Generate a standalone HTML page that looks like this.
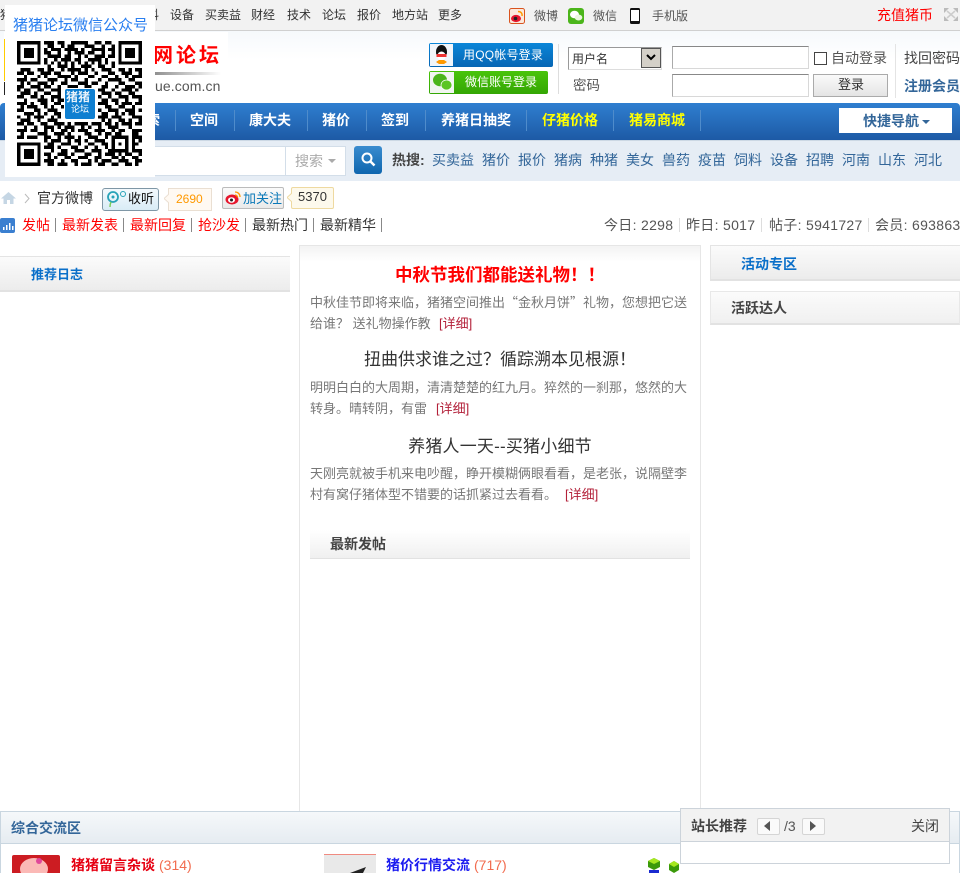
<!DOCTYPE html>
<html lang="zh"><head><meta charset="utf-8"><title>猪猪网论坛</title>
<style>
html,body{margin:0;padding:0;background:#fff}
#p{position:relative;width:960px;height:873px;overflow:hidden;font-family:"Liberation Sans","WenQuanYi Zen Hei","Noto Sans CJK SC",sans-serif;font-size:14px;color:#444;background:#fff}
#p div,#p span.a,#p svg{position:absolute}
.t{position:absolute;white-space:nowrap;line-height:20px;height:20px}
.s12{font-size:12px}.s13{font-size:13px}.b{font-weight:bold}
.n{color:#fff;font-weight:bold;font-size:14px;top:110px}
.y{color:#ff0}
.d{width:1px;top:110px;height:21px;background:#4f8ccb}
.h{color:#369;top:150px}
.bd{font-size:13px;color:#777;line-height:21px;left:310px;width:382px;white-space:nowrap}
.bd i{font-style:normal;color:#b3213a;position:absolute;top:21px}
.c{left:300px;width:400px;text-align:center;white-space:nowrap;line-height:24px}
.f{font-family:"Noto Sans CJK SC",sans-serif;line-height:1}
.st{color:#555;letter-spacing:.3px;top:215px}
</style></head><body><div id="p">

<div style="left:0;top:0;width:960px;height:30px;background:#f2f2f2;border-bottom:1px solid #d0d0d0"></div>
<span class="t s12" style="left:0;top:5px;color:#333">猪</span>
<span class="t s12" style="left:147px;top:5px;color:#333">料</span>
<span class="t s12" style="left:170px;top:5px;color:#333">设备</span>
<span class="t s12" style="left:205px;top:5px;color:#333">买卖益</span>
<span class="t s12" style="left:251px;top:5px;color:#333">财经</span>
<span class="t s12" style="left:287px;top:5px;color:#333">技术</span>
<span class="t s12" style="left:322px;top:5px;color:#333">论坛</span>
<span class="t s12" style="left:357px;top:5px;color:#333">报价</span>
<span class="t s12" style="left:392px;top:5px;color:#333">地方站</span>
<span class="t s12" style="left:438px;top:5px;color:#333">更多</span>

<svg style="left:509px;top:8px" width="16" height="16" viewBox="0 0 16 16"><rect x=".5" y=".5" width="15" height="15" rx="2" fill="#fbe9dc" stroke="#d9531e"/><ellipse cx="7" cy="10.500" rx="5" ry="3.600" fill="#e6162d"/><circle cx="6.500" cy="10.500" r="1.800" fill="#222"/><path d="M9 3.500c3 0 4.500 2 4 4.500" fill="none" stroke="#f90" stroke-width="1.500"/></svg>
<span class="t s12" style="left:534px;top:6px;color:#555">微博</span>
<svg style="left:568px;top:8px" width="16" height="16" viewBox="0 0 16 16"><rect width="16" height="16" rx="3" fill="#4bb51a"/><ellipse cx="6.500" cy="6.500" rx="4.500" ry="3.700" fill="#fff"/><ellipse cx="10.500" cy="9.500" rx="3.800" ry="3" fill="#eaf7df"/></svg>
<span class="t s12" style="left:593px;top:6px;color:#555">微信</span>
<svg style="left:630px;top:8px" width="10" height="16" viewBox="0 0 10 16"><rect width="10" height="16" rx="1.500" fill="#111"/><rect x="1" y="2" width="8" height="11" fill="#fff"/></svg>
<span class="t s12" style="left:652px;top:6px;color:#555">手机版</span>
<span class="t" style="left:877px;top:5px;color:#f00;font-size:14px">充值猪币</span>
<svg style="left:943px;top:7px" width="16" height="15" viewBox="0 0 16 15"><path d="M1 1h5L1 6zM15 1h-5l5 5zM1 14h5L1 9zM15 14h-5l5-5z" fill="#bbb"/><path d="M4 4l8 7M12 4l-8 7" stroke="#ccc" stroke-width="1.500"/></svg>

<!-- header -->
<div style="left:0;top:31px;width:960px;height:72px;background:linear-gradient(#f6f9fc,#fff 40%)"></div>
<div style="left:4px;top:32px;width:224px;height:70px;background:#fff"></div>
<div style="left:4px;top:39px;width:2px;height:42px;background:#fc0"></div>
<div style="left:4px;top:82px;width:1px;height:13px;background:#222"></div>
<span class="t b" style="left:153px;top:45px;color:#f00;font-size:20px;line-height:22px;height:22px;letter-spacing:3px">网论坛</span>
<div style="left:150px;top:72px;width:71px;height:3px;background:linear-gradient(90deg,#888,#fff)"></div>
<span class="t" style="left:155px;top:76px;color:#555;font-size:14px;letter-spacing:.1px">ue.com.cn</span>

<!-- login buttons -->
<div style="left:429px;top:43px;width:124px;height:24px;background:linear-gradient(#0a86d8,#0766b4);border-radius:2px"></div>
<div style="left:430px;top:44px;width:23px;height:22px;background:#f1f5fa"></div>
<svg style="left:433px;top:44px" width="17" height="21" viewBox="0 0 17 21"><ellipse cx="8.500" cy="8" rx="5.500" ry="7" fill="#111"/><ellipse cx="8.500" cy="12" rx="4.200" ry="4.500" fill="#fff"/><rect x="3.500" y="10" width="10" height="3" fill="#e33"/><path d="M3 18l3-2h5l3 2-3 2H6z" fill="#f90"/></svg>
<span class="t s12" style="left:463px;top:45px;color:#fff;letter-spacing:.2px">用QQ帐号登录</span>
<div style="left:429px;top:71px;width:119px;height:23px;background:linear-gradient(#49c40a,#34a604);border-radius:2px"></div>
<div style="left:430px;top:72px;width:24px;height:21px;background:#f1f5f0"></div>
<svg style="left:432px;top:72px" width="21" height="20" viewBox="0 0 21 20"><ellipse cx="8" cy="8" rx="7" ry="6.200" fill="#4bb51a"/><ellipse cx="14.500" cy="13" rx="5.500" ry="5" fill="#5cc523" stroke="#fff" stroke-width=".7"/></svg>
<span class="t s12" style="left:465px;top:72px;color:#fff">微信账号登录</span>
<div style="left:558px;top:44px;width:1px;height:50px;background:#ddd"></div>

<!-- form -->
<div style="left:568px;top:47px;width:92px;height:21px;border:1px solid #ddd;border-top-color:#999;border-left-color:#999;background:#fff"></div>
<span class="t s12" style="left:572px;top:49px;color:#333">用户名</span>
<div style="left:641px;top:48px;width:18px;height:18px;background:#d4d0c8;border:1px solid #555"></div>
<svg style="left:645px;top:53px" width="12" height="9" viewBox="0 0 12 9"><path d="M2 2l4 4 4-4" fill="none" stroke="#000" stroke-width="2"/></svg>
<span class="t" style="left:573px;top:76px;color:#555;font-size:13.500px">密码</span>
<div style="left:672px;top:46px;width:135px;height:21px;border:1px solid #d8d8d8;border-top-color:#888;border-left-color:#aaa;background:#fff"></div>
<div style="left:672px;top:74px;width:135px;height:21px;border:1px solid #d8d8d8;border-top-color:#888;border-left-color:#aaa;background:#fff"></div>
<div style="left:814px;top:52px;width:11px;height:11px;border:1px solid #444;background:#fff"></div>
<span class="t" style="left:831px;top:48px;color:#555">自动登录</span>
<div style="left:813px;top:74px;width:73px;height:21px;border:1px solid #aaa;background:linear-gradient(#fafafa,#e4e4e4)"></div>
<span class="t s13" style="left:838px;top:75px;color:#333">登录</span>
<div style="left:895px;top:44px;width:1px;height:54px;background:#e4e4e4"></div>
<span class="t" style="left:904px;top:48px;color:#444">找回密码</span>
<span class="t b" style="left:904px;top:76px;color:#369">注册会员</span>

<!-- nav -->
<div style="left:0;top:103px;width:960px;height:37px;border-radius:4px 4px 0 0;background:linear-gradient(#2f7fd0,#1d5aa5)"></div>
<div style="left:0;top:140px;width:960px;height:1px;background:#ccd8e4"></div>
<span class="t n" style="left:146px">索</span>
<div class="d" style="left:175px"></div><span class="t n" style="left:190px">空间</span>
<div class="d" style="left:234px"></div><span class="t n" style="left:249px">康大夫</span>
<div class="d" style="left:307px"></div><span class="t n" style="left:322px">猪价</span>
<div class="d" style="left:366px"></div><span class="t n" style="left:381px">签到</span>
<div class="d" style="left:425px"></div><span class="t n" style="left:441px">养猪日抽奖</span>
<div class="d" style="left:526px"></div><span class="t n y" style="left:542px">仔猪价格</span>
<div class="d" style="left:613px"></div><span class="t n y" style="left:629px">猪易商城</span>
<div class="d" style="left:700px"></div>
<div style="left:839px;top:108px;width:113px;height:25px;background:#fff"></div>
<span class="t b" style="left:863px;top:111px;color:#369;font-size:14px">快捷导航</span>
<div style="left:922px;top:120px;width:0;height:0;border:4px solid transparent;border-top:4px solid #369;border-bottom:0"></div>

<!-- search band -->
<div style="left:0;top:141px;width:960px;height:40px;background:#e6edf5"></div>
<div style="left:100px;top:146px;width:244px;height:28px;background:#fff;border:1px solid #d3dee9"></div>
<div style="left:285px;top:146px;width:1px;height:29px;background:#d3dee9"></div>
<span class="t" style="left:295px;top:151px;color:#aaa">搜索</span>
<div style="left:328px;top:159px;width:0;height:0;border:4px solid transparent;border-top:4px solid #aaa;border-bottom:0"></div>
<div style="left:354px;top:146px;width:28px;height:28px;border-radius:3px;background:linear-gradient(#3a8ccf,#0f66ae)"></div>
<svg style="left:360px;top:151px" width="17" height="17" viewBox="0 0 17 17"><circle cx="7" cy="7" r="4.500" fill="none" stroke="#fff" stroke-width="2"/><path d="M10.500 10.500l4 4" stroke="#fff" stroke-width="2.500"/></svg>
<span class="t b" style="left:392px;top:150px;color:#444;font-size:14px">热搜:</span>
<span class="t h" style="left:432px">买卖益</span><span class="t h" style="left:482px">猪价</span><span class="t h" style="left:518px">报价</span><span class="t h" style="left:554px">猪病</span><span class="t h" style="left:590px">种猪</span><span class="t h" style="left:626px">美女</span><span class="t h" style="left:662px">兽药</span><span class="t h" style="left:698px">疫苗</span><span class="t h" style="left:734px">饲料</span><span class="t h" style="left:770px">设备</span><span class="t h" style="left:806px">招聘</span><span class="t h" style="left:842px">河南</span><span class="t h" style="left:878px">山东</span><span class="t h" style="left:914px">河北</span>

<!-- weibo row -->
<svg style="left:1px;top:191px" width="15" height="14" viewBox="0 0 15 14"><path d="M7.500 1L0 7.500h2.500V13h3.500V9h3v4h3.500V7.500H15z" fill="#c5d6e4"/></svg>
<svg style="left:24px;top:193px" width="6" height="11" viewBox="0 0 6 11"><path d="M1 1l4 4.500-4 4.500" fill="none" stroke="#bbb"/></svg>
<span class="t" style="left:37px;top:188px;color:#333">官方微博</span>
<div style="left:102px;top:188px;width:55px;height:21px;border:1px solid #7f97a6;border-radius:3px;background:linear-gradient(#f3f9fd,#d9ecf6)"></div>
<svg style="left:106px;top:190px" width="22" height="18" viewBox="0 0 22 18"><circle cx="7" cy="7" r="5" fill="none" stroke="#28a3b8" stroke-width="1.800"/><circle cx="7" cy="7" r="1.500" fill="#28a3b8"/><path d="M5 12c-1 2-1 3-1 5" stroke="#7c5" stroke-width="1.400" fill="none"/><circle cx="17" cy="4" r="2.500" fill="none" stroke="#28a3b8"/></svg>
<span class="t s13" style="left:128px;top:189px;color:#111">收听</span>
<div style="left:168px;top:188px;width:42px;height:21px;border:1px solid #eadfd2;background:#fff9f2"></div>
<svg style="left:164px;top:194px" width="5" height="9" viewBox="0 0 5 9"><path d="M5 0L0 4.500 5 9z" fill="#fff9f2"/><path d="M5 0L0 4.500 5 9" fill="none" stroke="#eadfd2"/></svg>
<span class="t s12" style="left:176px;top:189px;color:#f90">2690</span>
<div style="left:222px;top:187px;width:60px;height:20px;border:1px solid #bbb;border-radius:2px;background:linear-gradient(#fafafa,#eaeaea)"></div>
<svg style="left:225px;top:190px" width="17" height="15" viewBox="0 0 17 15"><ellipse cx="7" cy="9.500" rx="6.500" ry="5" fill="#e6162d"/><ellipse cx="6.500" cy="10" rx="3.500" ry="2.800" fill="#fff"/><circle cx="6.500" cy="10" r="1.500" fill="#222"/><path d="M10 2c3 0 5 2 5 5M10 5c1.500 0 2.500 1 2.500 2.500" fill="none" stroke="#f90" stroke-width="1.300"/></svg>
<span class="t s13" style="left:243px;top:189px;color:#0a78b8">加关注</span>
<div style="left:291px;top:187px;width:41px;height:20px;border:1px solid #eed9a0;background:#fdf9ec;border-radius:2px"></div>
<svg style="left:287px;top:193px" width="5" height="9" viewBox="0 0 5 9"><path d="M5 0L0 4.500 5 9z" fill="#fdf9ec"/><path d="M5 0L0 4.500 5 9" fill="none" stroke="#eed9a0"/></svg>
<span class="t s13" style="left:298px;top:187px;color:#333">5370</span>

<!-- stats row -->
<svg style="left:0;top:218px" width="15" height="15" viewBox="0 0 15 15"><rect width="15" height="15" rx="2" fill="#3a7fd0"/><path d="M3 9h1.500v3H3zM6 7h1.500v5H6zM9 5h1.500v7H9zM12 8h1.500v4H12z" fill="#fff"/></svg>
<span class="t" style="left:22px;top:215px;color:#f00">发帖</span>
<span class="t" style="left:62px;top:215px;color:#f00">最新发表</span>
<span class="t" style="left:130px;top:215px;color:#f00">最新回复</span>
<span class="t" style="left:198px;top:215px;color:#f00">抢沙发</span>
<span class="t" style="left:252px;top:215px;color:#333">最新热门</span>
<span class="t" style="left:320px;top:215px;color:#333">最新精华</span>
<div style="left:55px;top:218px;width:1px;height:14px;background:#888"></div>
<div style="left:123px;top:218px;width:1px;height:14px;background:#888"></div>
<div style="left:191px;top:218px;width:1px;height:14px;background:#888"></div>
<div style="left:245px;top:218px;width:1px;height:14px;background:#888"></div>
<div style="left:313px;top:218px;width:1px;height:14px;background:#888"></div>
<div style="left:381px;top:218px;width:1px;height:14px;background:#888"></div>
<span class="t st" style="left:604px">今日: 2298</span>
<span class="t st" style="left:686px">昨日: 5017</span>
<span class="t st" style="left:769px">帖子: 5941727</span>
<span class="t st" style="left:875px">会员: 693863</span>
<div style="left:679px;top:218px;width:1px;height:14px;background:#ddd"></div>
<div style="left:761px;top:218px;width:1px;height:14px;background:#ddd"></div>
<div style="left:868px;top:218px;width:1px;height:14px;background:#ddd"></div>

<!-- left col -->
<div style="left:0;top:256px;width:290px;height:33px;border-top:1px solid #e4e4e4;border-bottom:2px solid #e2e2e2;background:linear-gradient(#fbfbfb,#ececec)"></div>
<span class="t s13 b" style="left:31px;top:265px;color:#0a6fc9">推荐日志</span>

<!-- centre col -->
<div style="left:299px;top:245px;width:400px;height:565px;border:1px solid #e6e6e6;background:#fff"></div>
<div style="left:300px;top:246px;width:400px;height:16px;background:linear-gradient(#f3f3f3,#fff)"></div>
<span class="a c b" style="top:263px;color:#f00;font-size:17.500px">中秋节我们都能送礼物！！</span>
<div class="bd" style="top:292px">中秋佳节即将来临，猪猪空间推出<span class="f">“金秋月饼”</span>礼物，您想把它送<br>给谁？ 送礼物操作教<i style="left:129px">[详细]</i></div>
<span class="a c" style="top:348px;color:#333;font-size:17px">扭曲供求谁之过<span class="f">？</span>循踪溯本见根源<span class="f">！</span></span>
<div class="bd" style="top:377px">明明白白的大周期，清清楚楚的红九月。猝然的一刹那，悠然的大<br>转身。晴转阴，有雷<i style="left:126px">[详细]</i></div>
<span class="a c" style="top:435px;color:#333;font-size:17px;letter-spacing:.2px">养猪人一天--买猪小细节</span>
<div class="bd" style="top:463px">天刚亮就被手机来电吵醒，睁开模糊俩眼看看，是老张，说隔壁李<br>村有窝仔猪体型不错要的话抓紧过去看看。<i style="left:255px">[详细]</i></div>
<div style="left:310px;top:530px;width:380px;height:28px;border-bottom:1px solid #e2e2e2;background:linear-gradient(#fff,#f0f0f0)"></div>
<span class="t b" style="left:330px;top:534px;color:#444">最新发帖</span>

<!-- right col -->
<div style="left:710px;top:245px;width:250px;height:33px;border-top:1px solid #e4e4e4;border-left:1px solid #e4e4e4;border-bottom:2px solid #e2e2e2;background:linear-gradient(#fbfbfb,#ececec)"></div>
<span class="t b" style="left:741px;top:254px;color:#0a6fc9">活动专区</span>
<div style="left:710px;top:291px;width:248px;height:31px;border:1px solid #e8e8e8;border-bottom:2px solid #e2e2e2;background:linear-gradient(#fbfbfb,#f0f0f0)"></div>
<span class="t b" style="left:731px;top:298px;color:#444">活跃达人</span>

<!-- bottom -->
<div style="left:0;top:811px;width:958px;height:62px;border:1px solid #c9d6e0"></div>
<div style="left:1px;top:812px;width:958px;height:31px;border-bottom:1px solid #c9d6e0;background:linear-gradient(#f5f8fa,#e6ecf1)"></div>
<span class="t b" style="left:11px;top:818px;color:#369">综合交流区</span>
<div style="left:12px;top:855px;width:48px;height:18px;background:#cc1c22;border-radius:2px 2px 0 0"></div>
<svg style="left:16px;top:855px" width="36" height="18" viewBox="0 0 36 18"><ellipse cx="18" cy="14" rx="14" ry="11" fill="#fbb9b6"/><circle cx="23" cy="6" r="3" fill="#e0489a"/></svg>
<span class="t b" style="left:71px;top:855px;color:#e60012">猪猪留言杂谈</span>
<span class="t" style="left:159px;top:855px;color:#f26c4f">(314)</span>
<div style="left:324px;top:854px;width:52px;height:19px;border-top:1px solid #f08a80;background:#e9e9e9"></div>
<svg style="left:350px;top:866px" width="26" height="7" viewBox="0 0 26 7"><path d="M0 7L16 1l-3 6z" fill="#222"/></svg>
<span class="t b" style="left:386px;top:855px;color:#1c1cf0">猪价行情交流</span>
<span class="t" style="left:474px;top:855px;color:#f26c4f">(717)</span>
<svg style="left:646px;top:857px" width="34" height="16" viewBox="0 0 34 16"><path d="M2 4l6-3 6 3v6l-6 3-6-3z" fill="#3b9a0a"/><path d="M2 4l6-3 6 3-6 3z" fill="#a5e81f"/><rect x="3" y="13" width="10" height="3" fill="#1a2ad0"/><path d="M23 7l5-3 5 3v6l-5 3-5-3z" fill="#3b9a0a"/><path d="M23 7l5-3 5 3-5 3z" fill="#a5e81f"/></svg>

<!-- popup -->
<div style="left:680px;top:808px;width:268px;height:54px;border:1px solid #ccd3da;background:#fff"></div>
<div style="left:681px;top:809px;width:268px;height:32px;background:#f2f2f2;border-bottom:1px solid #ccd3da"></div>
<span class="t b" style="left:691px;top:816px;color:#444">站长推荐</span>
<div style="left:757px;top:818px;width:21px;height:15px;border:1px solid #d5d5d5;border-radius:2px;background:#fafafa"></div>
<svg style="left:764px;top:821px" width="7" height="11" viewBox="0 0 7 11"><path d="M6 0v10L0 5z" fill="#555"/></svg>
<span class="t" style="left:784px;top:816px;color:#555">/3</span>
<div style="left:802px;top:818px;width:21px;height:15px;border:1px solid #d5d5d5;border-radius:2px;background:#fafafa"></div>
<svg style="left:810px;top:821px" width="7" height="11" viewBox="0 0 7 11"><path d="M0 0v10l6-5z" fill="#555"/></svg>
<span class="t" style="left:911px;top:816px;color:#444">关闭</span>

<!-- QR panel -->
<div style="left:5px;top:5px;width:150px;height:172px;background:#fff"></div>
<span class="t" style="left:13px;top:16px;color:#2a7ff0;font-size:15px">猪猪论坛微信公众号</span>
<svg style="left:17px;top:41px" width="125" height="125" viewBox="0 0 37 37" shape-rendering="crispEdges">
<path fill-rule="evenodd" d="M0 0h7v7H0zM1 1v5h5V1zM2 2h3v3H2zM30 0h7v7h-7zM31 1v5h5V1zM32 2h3v3h-3zM0 30h7v7H0zM1 31v5h5v-5zM2 32h3v3H2zM28 28h5v5h-5zM29 29v3h3v-3zM30 30h1v1h-1z" fill="#000"/>
<path transform="translate(0 .5)" stroke="#000" stroke-width="1" fill="none" d="M8 0h3M12 0h2M16 0h5M23 0h2M26 0h2
M9 1h2M13 1h1M15 1h2M20 1h3M25 1h1M28 1h1
M8 2h1M10 2h3M14 2h4M19 2h1M22 2h4M27 2h2
M8 3h2M12 3h1M15 3h1M17 3h3M21 3h2M25 3h1M28 3h1
M9 4h4M14 4h2M18 4h1M20 4h1M23 4h3M27 4h2
M8 5h1M11 5h1M13 5h3M17 5h2M21 5h4M26 5h1
M8 6h1M10 6h1M12 6h1M14 6h1M16 6h1M18 6h1M20 6h1M22 6h1M24 6h1M26 6h1M28 6h1
M9 7h1M12 7h3M16 7h1M19 7h3M24 7h2M28 7h1
M1 8h3M6 8h2M9 8h2M13 8h1M15 8h4M20 8h1M22 8h1M25 8h3M30 8h2M33 8h1M35 8h2
M0 9h2M3 9h2M7 9h3M11 9h2M16 9h1M18 9h3M23 9h1M27 9h2M31 9h3M36 9h1
M2 10h1M6 10h1M8 10h1M12 10h4M17 10h1M21 10h2M25 10h2M29 10h1M32 10h1M34 10h3
M0 11h3M4 11h2M9 11h3M14 11h1M16 11h2M20 11h1M24 11h1M27 11h4M33 11h2
M1 12h1M3 12h1M6 12h3M10 12h1M13 12h2M18 12h3M22 12h2M26 12h1M30 12h2M35 12h2
M0 13h2M4 13h3M8 13h2M12 13h1M15 13h3M20 13h2M25 13h2M29 13h1M32 13h3M36 13h1
M0 14h1M2 14h2M6 14h2M10 14h3M24 14h2M28 14h1M31 14h3M35 14h1
M1 15h3M5 15h1M8 15h2M12 15h1M25 15h3M29 15h2M33 15h2
M0 16h2M4 16h2M7 16h1M10 16h3M24 16h1M27 16h1M30 16h3M34 16h3
M2 17h1M6 17h3M10 17h1M12 17h2M25 17h2M28 17h2M32 17h1M36 17h1
M0 18h3M4 18h1M7 18h2M11 18h2M24 18h3M29 18h1M31 18h3M35 18h2
M1 19h1M3 19h3M8 19h1M10 19h1M13 19h1M26 19h2M30 19h2M34 19h1
M0 20h2M5 20h2M9 20h3M24 20h1M27 20h3M32 20h3M36 20h1
M2 21h3M6 21h1M8 21h1M11 21h2M25 21h2M29 21h1M31 21h1M33 21h2
M0 22h1M3 22h1M5 22h3M10 22h1M12 22h1M24 22h3M28 22h3M34 22h3
M1 23h3M6 23h1M9 23h3M25 23h1M27 23h1M30 23h2M33 23h1M36 23h1
M0 24h2M3 24h2M7 24h2M11 24h3M15 24h1M17 24h4M22 24h3M26 24h2M29 24h1M31 24h3M35 24h2
M2 25h1M5 25h1M8 25h3M12 25h1M14 25h3M19 25h1M21 25h1M24 25h1M27 25h3M33 25h1
M0 26h3M4 26h2M8 26h1M10 26h1M13 26h2M16 26h1M18 26h3M23 26h3M28 26h1M30 26h2M34 26h3
M1 27h1M6 27h3M11 27h3M15 27h1M20 27h2M24 27h1M26 27h2M29 27h2M34 27h2
M0 28h2M3 28h3M8 28h2M12 28h1M14 28h3M18 28h1M21 28h3M26 28h1M34 28h3
M8 29h1M10 29h3M15 29h1M17 29h2M20 29h1M23 29h3M34 29h1M36 29h1
M9 30h2M13 30h3M18 30h1M21 30h2M25 30h2M34 30h2
M8 31h3M12 31h1M16 31h2M20 31h1M23 31h1M26 31h1M34 31h1
M10 32h1M13 32h2M17 32h3M22 32h3M27 32h1M34 32h3
M8 33h2M12 33h3M16 33h1M20 33h2M24 33h1M26 33h3M30 33h1M32 33h2M36 33h1
M9 34h1M11 34h1M14 34h2M18 34h3M23 34h2M28 34h2M31 34h1M34 34h2
M8 35h3M13 35h1M16 35h2M21 35h1M23 35h1M25 35h3M30 35h3M35 35h2
M9 36h2M12 36h3M17 36h1M19 36h3M24 36h2M28 36h2M32 36h2M35 36h1"/>
</svg>
<div style="left:64px;top:88px;width:30px;height:30px;background:#0f7fd1;border:1px solid #fff;border-radius:3px"></div>
<span class="t b" style="left:66px;top:89px;color:#e8f2fa;font-size:12px;line-height:16px;height:16px">猪猪</span>
<span class="t" style="left:71px;top:102px;color:#fff;font-size:9px;line-height:14px;height:14px">论坛</span>

</div></body></html>
